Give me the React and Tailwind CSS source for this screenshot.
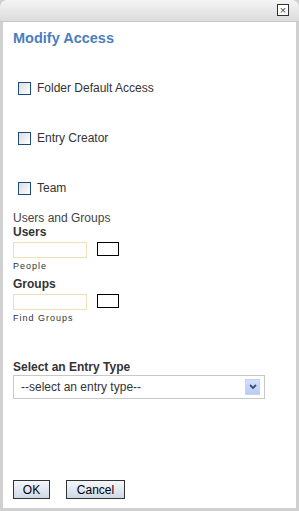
export default function App() {
  const font = { fontFamily: '"Liberation Sans", Arial, sans-serif' }
  return (
    <div className="w-[299px] h-[511px] bg-[#d0d0d0] flex flex-col" style={font}>
      <div className="h-[22px] shrink-0 rounded-tl-[7px] rounded-tr-[7px] bg-gradient-to-b from-[#f4f4f4] to-[#dcdcdc] border-b border-[#c8c8c8] flex justify-end items-start pt-[4px] pr-[10px]">
        <div className="w-[12px] h-[12px] border border-[#333] bg-white flex items-center justify-center text-[11px] leading-none text-[#444]">
          ×
        </div>
      </div>
      <div className="flex-1 mx-[3px] mb-[3px] bg-white flex flex-col px-[10px]">
        <h1 className="mt-[8px] text-[14.5px] font-bold text-[#4a7ec0] leading-[16px]">Modify Access</h1>

        <label className="mt-[33px] flex items-center gap-[6px] pl-[5px] text-[12px] text-[#333]">
          <span className="w-[13px] h-[13px] border border-[#1c4a7a] bg-gradient-to-br from-[#dcdcdc] to-white" />
          Folder Default Access
        </label>
        <label className="mt-[32px] flex items-center gap-[6px] pl-[5px] text-[12px] text-[#333]">
          <span className="w-[13px] h-[13px] border border-[#1c4a7a] bg-gradient-to-br from-[#dcdcdc] to-white" />
          Entry Creator
        </label>
        <label className="mt-[32px] flex items-center gap-[6px] pl-[5px] text-[12px] text-[#333]">
          <span className="w-[13px] h-[13px] border border-[#1c4a7a] bg-gradient-to-br from-[#dcdcdc] to-white" />
          Team
        </label>

        <div className="mt-[14px] text-[12px] text-[#444] leading-[14px]">Users and Groups</div>
        <div className="text-[12px] font-bold text-[#333] leading-[15px]">Users</div>
        <div className="mt-[2px] flex items-start gap-[10px]">
          <div className="w-[74px] h-[16px] border border-[#f0dfb8] bg-white" />
          <div className="w-[22px] h-[14px] border border-black" />
        </div>
        <div className="mt-[3px] text-[9px] tracking-[1px] text-[#333] leading-[11px]">People</div>
        <div className="mt-[5px] text-[12px] font-bold text-[#333] leading-[15px]">Groups</div>
        <div className="mt-[2px] flex items-start gap-[10px]">
          <div className="w-[74px] h-[16px] border border-[#f0dfb8] bg-white" />
          <div className="w-[22px] h-[14px] border border-black" />
        </div>
        <div className="mt-[3px] text-[9px] tracking-[1px] text-[#333] leading-[11px]">Find Groups</div>

        <div className="mt-[36px] text-[12px] font-bold text-[#333] leading-[14px]">Select an Entry Type</div>
        <div className="mt-[1px] w-[252px] h-[24px] border border-[#c8c8c8] flex items-center justify-between pl-[7px] pr-[4px] text-[12px] text-[#333]">
          <span>--select an entry type--</span>
          <span className="w-[15px] h-[16px] bg-gradient-to-b from-[#d4e0fb] to-[#b8cbf5] border border-[#c4d3f3] flex items-center justify-center">
            <svg width="8" height="6" viewBox="0 0 8 6">
              <path d="M1 1 L4 4 L7 1" stroke="#3a4f7a" strokeWidth="1.8" fill="none" />
            </svg>
          </span>
        </div>

        <div className="mt-auto mb-[9px] flex gap-[16px]">
          <button className="w-[37px] h-[19px] border border-[#333] bg-gradient-to-b from-[#f4f7fb] to-[#cdd9e8] text-[12px] text-black leading-none">OK</button>
          <button className="w-[59px] h-[19px] border border-[#333] bg-gradient-to-b from-[#f4f7fb] to-[#cdd9e8] text-[12px] text-black leading-none">Cancel</button>
        </div>
      </div>
    </div>
  )
}
